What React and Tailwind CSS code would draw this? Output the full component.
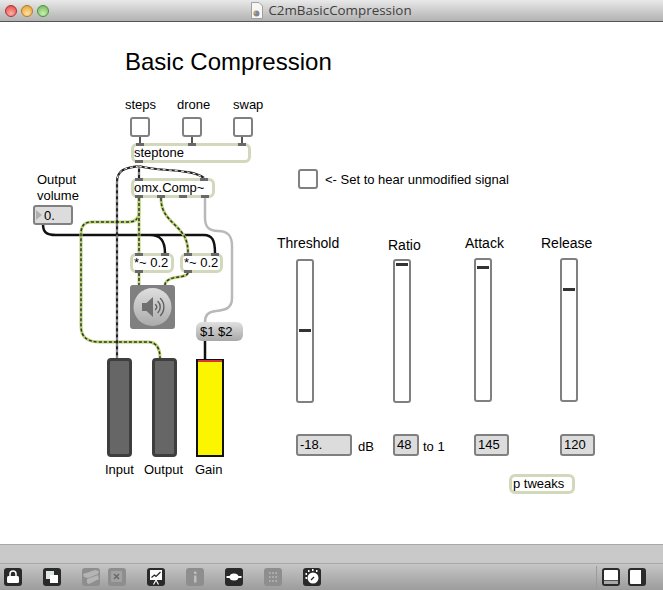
const SANS = "font-['Liberation_Sans',Arial,sans-serif]";

function Label({ className, children }) {
  return <div className={`absolute whitespace-nowrap leading-none text-black ${className}`}>{children}</div>;
}

function Toggle({ className }) {
  return <div className={`absolute w-5 h-5 rounded-[3px] border-2 border-[#808080] bg-white ${className}`} />;
}

function ObjBox({ className, children }) {
  return (
    <div className={`absolute h-5 rounded-md border-[3px] border-[#d2d8bc] bg-white text-[13px] leading-[14px] whitespace-nowrap ${className}`}>
      {children}
    </div>
  );
}

function NumBox({ className, children }) {
  return (
    <div className={`absolute h-[22px] rounded-[3px] border-2 border-[#808080] bg-[#dcdcdc] text-[13px] leading-[18px] pl-[2px] ${className}`}>
      {children}
    </div>
  );
}

function Slider({ className, knob }) {
  return (
    <div className={`absolute w-[18px] h-[144px] rounded-[3px] border-2 border-[#808080] bg-white ${className}`}>
      <div className={`absolute left-[1px] right-[1px] h-[3px] bg-[#333] ${knob}`} />
    </div>
  );
}

function Port({ className }) {
  return <div className={`absolute w-[8px] h-[3px] bg-[#696969] ${className}`} />;
}

function Meter({ className }) {
  return <div className={`absolute w-[25px] h-[99px] rounded-[4px] border-[3px] border-[#3e3e3e] bg-[#666] ${className}`} />;
}

// patch cords, in canvas coordinates
const SIGNAL = [
  "M139 176 L139 190 C139 197 135 200 128 200 L92 200 C84 200 81 204 81 212 L81 304 C81 315 87 320 100 320 L148 320 C156 320 160 326 160 336",
  "M139 176 L139 231",
  "M161 176 C161 190 168 196 176 204 C184 212 188 218 188 231",
  "M139 251 L139 263",
  "M188 251 C186 256 176 254 170 257 C166 259 165 261 165 263",
];
const CONTROL = [
  "M139 144 C128 146 117 146 117 160 L117 336",
  "M139 144 L139 156",
  "M139 144 C160 150 190 146 204 156",
];

function Cords() {
  return (
    <svg className="absolute left-0 top-0" width="663" height="522" viewBox="0 0 663 522" fill="none">
      {/* toggles down to steptone */}
      <path d="M140 115V122M192 115V122M242 115V122" stroke="#555" strokeWidth="2" />
      {/* gray message cord */}
      <path d="M205 176 L205 196 C205 206 210 209 218 209 C228 209 232 214 232 224 L232 276 C232 286 226 288 216 289 C208 290 205 293 205 300" stroke="#b9b9b9" strokeWidth="2.5" />
      {/* number box to the two gains */}
      <path d="M43 202 C43 210 46 213 56 213 L150 213 C160 213 165 218 165 231 M140 213 L204 213 C212 213 215 218 215 231" stroke="#111" strokeWidth="2.5" />
      {SIGNAL.map((d) => (
        <g key={d}>
          <path d={d} stroke="#b8d26e" strokeWidth="3" />
          <path d={d} stroke="#333" strokeWidth="1.5" strokeDasharray="3 2" />
        </g>
      ))}
      {CONTROL.map((d) => (
        <g key={d}>
          <path d={d} stroke="#222" strokeWidth="2.2" />
          <path d={d} stroke="#eee" strokeWidth="1" strokeDasharray="3 3" />
        </g>
      ))}
      <path d="M205 319 L205 337" stroke="#111" strokeWidth="2.5" />
    </svg>
  );
}

function SpeakerIcon() {
  return (
    <svg width="45" height="44" viewBox="0 0 45 44" fill="none">
      <defs>
        <linearGradient id="dac" x1="0" y1="0" x2="0" y2="1">
          <stop offset="0" stopColor="#dedede" />
          <stop offset="1" stopColor="#ababab" />
        </linearGradient>
      </defs>
      <circle cx="22.5" cy="22" r="19" fill="url(#dac)" />
      <path d="M12 18H16.5L23 12V32L16.5 26H12Z" fill="#707070" />
      <path d="M25.5 19.5C27 21 27 23 25.5 24.5M28 16.5C31 19.5 31 24.5 28 27.5M30.5 13.5C35 18 35 26 30.5 30.5" stroke="#606060" strokeWidth="1.4" strokeLinecap="round" />
    </svg>
  );
}

function Tool({ dim, children }) {
  return (
    <div className={`w-[18px] h-[18px] rounded-[3px] flex items-center justify-center ${dim ? "bg-[#8e8e8e]" : "bg-[#2a2a2a]"}`}>
      <svg width="18" height="18" viewBox="0 0 18 18" fill="none">{children}</svg>
    </div>
  );
}

function Toolbar() {
  return (
    <div className="h-[27px] shrink-0 flex items-center pl-1 pr-[17px] border-t border-[#a9a9a9] bg-gradient-to-b from-[#c6c6c6] to-[#9c9c9c]">
      <div className="flex gap-[21px]">
        <Tool>
          <path d="M6 8V6a3 3 0 0 1 6 0v2" stroke="#fff" strokeWidth="1.5" />
          <rect x="3" y="8" width="12" height="7" rx="1.5" fill="#fff" />
        </Tool>
        <Tool>
          <rect x="3" y="3" width="8" height="8" fill="#dfe6e2" />
          <rect x="7" y="7" width="8" height="8" fill="#fff" />
        </Tool>
        <div className="flex gap-2">
          <Tool dim>
            <path d="M1 6L13 2L17 3L16 6L6 10L2 9ZM5 11L16 7L17 11L7 16L5 15Z" fill="#b4b4b4" />
          </Tool>
          <Tool dim>
            <rect x="3" y="3" width="11" height="11" rx="1" fill="#a2a2a2" />
            <path d="M6 6L11 11M11 6L6 11" stroke="#6a6a6a" strokeWidth="1.6" />
          </Tool>
        </div>
        <Tool>
          <rect x="3" y="2" width="12" height="10" fill="#fff" />
          <path d="M4.5 9.5L7.5 7L9 8.5L13.5 4" stroke="#222" strokeWidth="1.2" />
          <path d="M9 12L6.5 16.5M9 12L11.5 16.5" stroke="#fff" strokeWidth="1.2" />
        </Tool>
        <Tool dim>
          <rect x="8" y="3.5" width="2.5" height="2.5" fill="#bdbdbd" />
          <rect x="8" y="7.5" width="2.5" height="7" fill="#bdbdbd" />
        </Tool>
        <Tool>
          <path d="M1.5 9H16.5" stroke="#fff" strokeWidth="2" />
          <ellipse cx="9" cy="9" rx="4.5" ry="3.5" fill="#fff" />
        </Tool>
        <Tool dim>
          <path d="M5 5H13M5 9H13M5 13H13" stroke="#bdbdbd" strokeWidth="1.6" strokeDasharray="1.6 1.6" />
        </Tool>
        <Tool>
          <circle cx="10" cy="10" r="5.5" fill="#fff" />
          <path d="M8 12L11 9" stroke="#222" strokeWidth="1.2" />
          <path d="M2.5 6H4M2.5 10H4M5 3H6.5M9 2H10.5M13 3H14.5" stroke="#fff" strokeWidth="1.8" />
        </Tool>
      </div>
      <div className="ml-auto h-[23px] w-px bg-[#9a9a9a] mr-[5px]" />
      <div className="flex gap-2">
        <div className="w-[18px] h-[18px] rounded-[3px] border-2 border-[#2a2a2a] bg-white flex flex-col justify-end">
          <div className="h-[4px] bg-[#a8a8a8] border-t border-[#555]" />
        </div>
        <div className="w-[18px] h-[18px] rounded-[3px] border-2 border-[#2a2a2a] bg-white flex justify-end">
          <div className="w-[3px] bg-[#2a2a2a]" />
        </div>
      </div>
    </div>
  );
}

export default function App() {
  return (
    <div className={`w-[663px] h-[590px] flex flex-col overflow-hidden bg-white ${SANS}`}>
      <div className="h-[22px] shrink-0 relative flex items-center justify-center border-b border-[#555] bg-gradient-to-b from-[#e9e9e9] to-[#b2b2b2]">
        <div className="absolute left-[5px] top-[5px] flex gap-[4px]">
          <div className="w-[12px] h-[12px] rounded-full border border-[#a33] bg-[radial-gradient(circle_at_50%_75%,#ffb0a8,#e0413c)]" />
          <div className="w-[12px] h-[12px] rounded-full border border-[#b27a1e] bg-[radial-gradient(circle_at_50%_75%,#ffe0a0,#e39b2e)]" />
          <div className="w-[12px] h-[12px] rounded-full border border-[#4d8f3c] bg-[radial-gradient(circle_at_50%_75%,#c8f0b0,#6cb356)]" />
        </div>
        <div className="flex items-center gap-[5px]">
          <svg width="12" height="17" viewBox="0 0 12 17">
            <path d="M0.5 0.5H8L11.5 4V16.5H0.5Z" fill="#f6f6f6" stroke="#a0a0a0" />
            <circle cx="5.5" cy="11.5" r="3" fill="#8a8a8a" />
            <circle cx="4" cy="10.5" r="1.2" fill="#d9a441" />
            <circle cx="6.5" cy="13" r="1" fill="#5b86c4" />
          </svg>
          <span className="text-[13.4px] text-[#3f3f3f] font-['Open_Sans',sans-serif] leading-none">C2mBasicCompression</span>
        </div>
      </div>

      <div className="relative flex-1">
        <Cords />
        <Label className="left-[125px] top-[28px] text-[24px]">Basic Compression</Label>

        <Label className="left-[125px] top-[76px] text-[13px]">steps</Label>
        <Label className="left-[177px] top-[76px] text-[13px]">drone</Label>
        <Label className="left-[233px] top-[76px] text-[13px]">swap</Label>
        <Toggle className="left-[130px] top-[95px]" />
        <Toggle className="left-[182px] top-[95px]" />
        <Toggle className="left-[233px] top-[95px]" />

        <ObjBox className="left-[131px] top-[121px] w-[120px]">steptone</ObjBox>
        <Port className="left-[136px] top-[121px]" />
        <Port className="left-[188px] top-[121px]" />
        <Port className="left-[238px] top-[121px]" />
        <Port className="left-[135px] top-[138px]" />

        <ObjBox className="left-[131px] top-[156px] w-[84px] text-[12.5px]">omx.Comp~</ObjBox>
        <Port className="left-[135px] top-[156px]" />
        <Port className="left-[200px] top-[156px]" />
        <Port className="left-[135px] top-[173px]" />
        <Port className="left-[157px] top-[173px]" />
        <Port className="left-[179px] top-[173px]" />
        <Port className="left-[201px] top-[173px]" />

        <Label className="left-[37px] top-[150px] text-[13px] !leading-[16px]">Output<br />volume</Label>
        <div className="absolute left-[33px] top-[183px] w-[40px] h-[20px] rounded-[3px] border-2 border-[#808080] bg-[#dcdcdc] flex items-center text-[13px] leading-none">
          <span className="ml-[1px] mr-[1px] w-0 h-0 border-y-[5px] border-y-transparent border-l-[6px] border-l-[#b0b0b0]" />
          <span className="ml-[1px]">0.</span>
        </div>

        <ObjBox className="left-[130px] top-[231px] w-[44px] pl-[1px]">*~ 0.2</ObjBox>
        <ObjBox className="left-[180px] top-[231px] w-[43px] pl-[1px]">*~ 0.2</ObjBox>
        <Port className="left-[135px] top-[231px]" />
        <Port className="left-[161px] top-[231px]" />
        <Port className="left-[184px] top-[231px]" />
        <Port className="left-[211px] top-[231px]" />
        <Port className="left-[135px] top-[248px]" />
        <Port className="left-[184px] top-[248px]" />

        <div className="absolute left-[130px] top-[263px] w-[45px] h-[44px] rounded-[3px] bg-[#808080]">
          <SpeakerIcon />
        </div>

        <div className="absolute left-[196px] top-[300px] w-[47px] h-[19px] rounded-md bg-gradient-to-b from-[#e0e0e0] to-[#a8a8a8] pl-[4px] text-[13px] leading-[19px]">$1 $2</div>

        <Meter className="left-[107px] top-[336px]" />
        <Meter className="left-[152px] top-[336px]" />
        <div className="absolute left-[196px] top-[337px] w-[28px] h-[98px] border-x-2 border-b-2 border-t border-[#111] bg-[#fbf500]">
          <div className="h-[2px] bg-[#d8353a]" />
        </div>
        <Label className="left-[105px] top-[441px] text-[13px]">Input</Label>
        <Label className="left-[144px] top-[441px] text-[13px]">Output</Label>
        <Label className="left-[195px] top-[441px] text-[13px]">Gain</Label>

        <Toggle className="left-[298px] top-[147px]" />
        <Label className="left-[325px] top-[151px] text-[13px]">&lt;- Set to hear unmodified signal</Label>

        <Label className="left-[277px] top-[214px] text-[14px]">Threshold</Label>
        <Label className="left-[388px] top-[216px] text-[14px]">Ratio</Label>
        <Label className="left-[465px] top-[214px] text-[14px]">Attack</Label>
        <Label className="left-[541px] top-[214px] text-[14px]">Release</Label>

        <Slider className="left-[296px] top-[237px]" knob="top-[68px]" />
        <Slider className="left-[393px] top-[237px]" knob="top-[2px]" />
        <Slider className="left-[474px] top-[236px]" knob="top-[6px]" />
        <Slider className="left-[560px] top-[236px]" knob="top-[28px]" />

        <NumBox className="left-[296px] top-[412px] w-[56px]">-18.</NumBox>
        <Label className="left-[358px] top-[418px] text-[13px]">dB</Label>
        <NumBox className="left-[393px] top-[412px] w-[26px]">48</NumBox>
        <Label className="left-[423px] top-[418px] text-[13px]">to 1</Label>
        <NumBox className="left-[474px] top-[412px] w-[35px]">145</NumBox>
        <NumBox className="left-[560px] top-[412px] w-[35px]">120</NumBox>

        <ObjBox className="left-[509px] top-[452px] w-[66px] pl-[1px]">p tweaks</ObjBox>
      </div>

      <div className="h-[19px] shrink-0 border-t border-[#a8a8a8] bg-[#c9c9c9]" />
      <Toolbar />
    </div>
  );
}
